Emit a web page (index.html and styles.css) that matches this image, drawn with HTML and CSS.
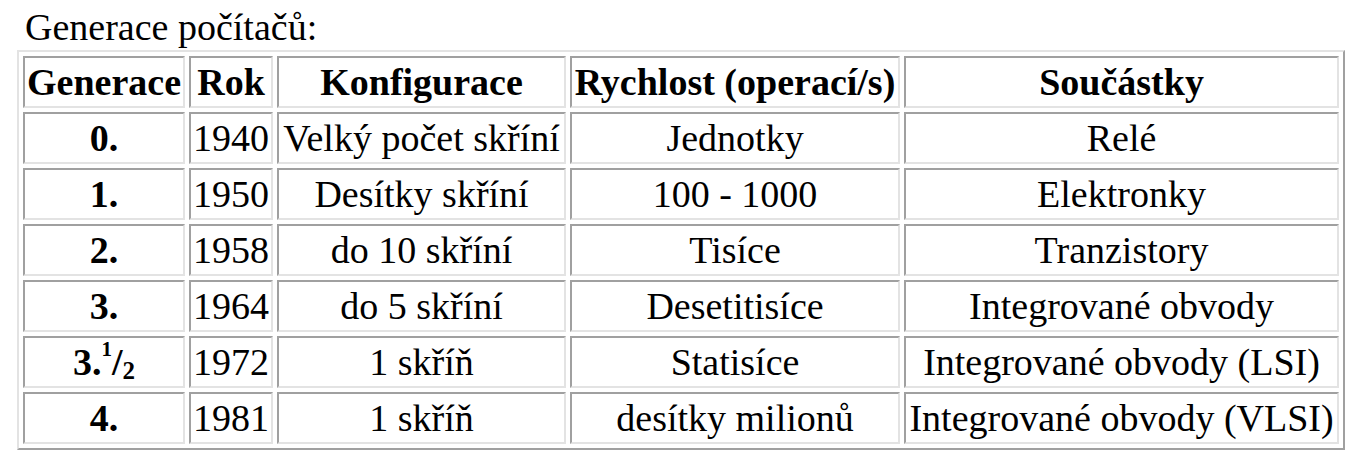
FILE: index.html
```html
<!DOCTYPE html>
<html lang="cs">
<head>
<meta charset="utf-8">
<title>Generace počítačů</title>
<link rel="stylesheet" href="styles.css">
</head>
<body>
<div class="page">
  <div class="caption">Generace počítačů:</div>
  <table class="gen-table">
    <thead>
      <tr>
        <th class="c-gen">Generace</th>
        <th class="c-rok">Rok</th>
        <th class="c-konf">Konfigurace</th>
        <th class="c-rych">Rychlost (operací/s)</th>
        <th class="c-souc">Součástky</th>
      </tr>
    </thead>
    <tbody>
      <tr><th>0.</th><td>1940</td><td>Velký počet skříní</td><td>Jednotky</td><td>Relé</td></tr>
      <tr><th>1.</th><td>1950</td><td>Desítky skříní</td><td>100 - 1000</td><td>Elektronky</td></tr>
      <tr><th>2.</th><td>1958</td><td>do 10 skříní</td><td>Tisíce</td><td>Tranzistory</td></tr>
      <tr><th>3.</th><td>1964</td><td>do 5 skříní</td><td>Desetitisíce</td><td>Integrované obvody</td></tr>
      <tr><th>3.<sup class="frac-up">1</sup>/<sub class="frac-down">2</sub></th><td>1972</td><td>1 skříň</td><td>Statisíce</td><td>Integrované obvody (LSI)</td></tr>
      <tr><th>4.</th><td>1981</td><td>1 skříň</td><td>desítky milionů</td><td>Integrované obvody (VLSI)</td></tr>
    </tbody>
  </table>
</div>
</body>
</html>
```

FILE: styles.css
```css
html, body {
  margin: 0;
  padding: 0;
  background: #ffffff;
  color: #000000;
}

.page {
  padding: 5px 0 0 17px;
  font-family: "Liberation Serif", "Times New Roman", serif;
  font-size: 38px;
  line-height: 44px;
}

.caption {
  padding-left: 8px;
  margin-bottom: 1px;
}

.gen-table {
  border-collapse: separate;
  border-spacing: 4px;
  border: 2px solid;
  border-color: #e3e3e3 #a0a0a0 #a0a0a0 #e3e3e3;
  font-size: 38px;
  line-height: 44px;
}

.gen-table th,
.gen-table td {
  border: 2px solid;
  border-color: #a0a0a0 #e3e3e3 #e3e3e3 #a0a0a0;
  padding: 2px;
  text-align: center;
  vertical-align: middle;
  white-space: nowrap;
}

.gen-table th {
  font-weight: bold;
}

.gen-table td {
  font-weight: normal;
}

.c-gen { width: 154px; }
.c-rok { width: 75px; }
.c-konf { width: 281px; }
.c-rych { width: 322px; }
.c-souc { width: 427px; }

.frac-up,
.frac-down {
  line-height: 0;
}

.frac-up {
  font-size: 21px;
  vertical-align: 19px;
}

.frac-down {
  font-size: 25px;
  vertical-align: -4px;
}
```
